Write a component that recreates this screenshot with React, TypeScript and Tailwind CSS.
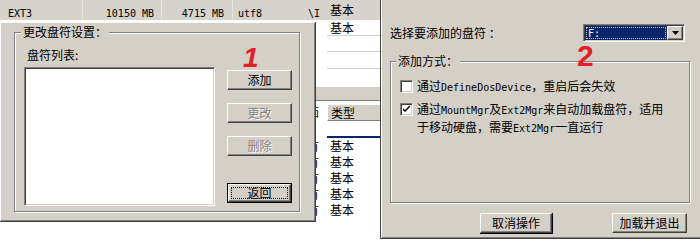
import type { ReactNode } from "react";

const raised =
  "border border-t-white border-l-white border-r-[#404040] border-b-[#404040] shadow-[inset_-1px_-1px_0_#808080] bg-[#d4d0c8]";
const sunken =
  "border border-t-[#808080] border-l-[#808080] border-r-white border-b-white shadow-[inset_1px_1px_0_#404040,inset_-1px_-1px_0_#d4d0c8]";
const etched = "border border-[#808080] shadow-[inset_1px_1px_0_#fff,1px_1px_0_#fff]";

function M({ children }: { children: ReactNode }) {
  return <span className="font-['DejaVu_Sans_Mono',monospace] text-[10px]">{children}</span>;
}

function Btn({
  children,
  className = "",
  disabled,
}: {
  children: ReactNode;
  className?: string;
  disabled?: boolean;
}) {
  return (
    <div
      className={`${raised} flex h-[20px] items-center justify-center text-[12px] leading-none ${
        disabled ? "text-[#808080] [text-shadow:1px_1px_0_#fff]" : "text-black"
      } ${className}`}
    >
      {children}
    </div>
  );
}

function Checkbox({ checked }: { checked?: boolean }) {
  return (
    <div className={`${sunken} flex h-[13px] w-[13px] shrink-0 items-center justify-center bg-white`}>
      {checked && (
        <svg width="7" height="7" viewBox="0 0 7 7">
          <path d="M0 2 L0 4 L2 6 L7 1 L7 -1 L2 4 Z" fill="#000" />
        </svg>
      )}
    </div>
  );
}

function ListRow({
  h,
  frag,
  text,
  cellClass = "",
}: {
  h: string;
  frag?: string;
  text?: string;
  cellClass?: string;
}) {
  return (
    <div className={`flex ${h}`}>
      <div className="w-[27px] overflow-hidden whitespace-nowrap pl-[7px] text-[12px] leading-[16px]">
        {frag}
      </div>
      <div className={`w-[53px] pl-[3px] text-[12px] leading-[16px] ${cellClass}`}>{text}</div>
    </div>
  );
}

export default function App() {
  return (
    <div className="relative h-[241px] w-[700px] overflow-hidden bg-white font-['Noto_Sans_CJK_SC',sans-serif] text-black">
      {/* window behind: file system list */}
      <div className="flex h-[20px] w-[380px] items-center bg-[#d6d3cd] whitespace-nowrap">
        <div className="h-full w-[83px] border-r border-r-[#e8e6e1] pl-[8px] leading-[20px]">
          <M>EXT3</M>
        </div>
        <div className="h-full w-[79px] border-r border-r-[#e8e6e1] pr-[7px] text-right leading-[20px]">
          <M>10150 MB</M>
        </div>
        <div className="h-full w-[71px] border-r border-r-[#e8e6e1] pr-[8px] text-right leading-[20px]">
          <M>4715 MB</M>
        </div>
        <div className="h-full w-[67px] pl-[5px] leading-[20px]">
          <M>utf8</M>
        </div>
        <div className="h-full w-[27px] overflow-hidden pl-[8px] leading-[20px]">
          <M>\I</M>
        </div>
        <div className="h-full w-[53px] pl-[3px] text-[12px] leading-[20px]">基本</div>
      </div>
      <div className="flex">
        <div className="w-[300px]" />
        <div className="flex w-[80px] flex-col">
          <ListRow h="h-[16px]" text="基本" frag="I" cellClass="border-b border-b-[#d0d0d0]" />
          <ListRow h="h-[16px]" cellClass="border-b border-b-[#d0d0d0]" />
          <ListRow h="h-[17px]" cellClass="border-b border-b-[#d0d0d0]" />
          <ListRow h="h-[18px]" />
          <div className="h-[14px] border-b border-b-[#808080] bg-[#d4d0c8]" />
          <div className="h-[3px]" />
          <ListRow
            h="h-[17px]"
            frag="茄"
            text="类型"
            cellClass="bg-[#d4d0c8] border-t border-t-white border-b border-b-[#808080] border-l border-l-white leading-[14px]"
          />
          <div className="h-[15px]" />
          <div className="flex h-[2px]">
            <div className="w-[27px]" />
            <div className="w-[53px] bg-[#0a246a]" />
          </div>
          {[0, 1, 2, 3, 4].map((i) => (
            <ListRow key={i} h="h-[16px]" text="基本" frag="有" />
          ))}
        </div>
      </div>

      {/* left dialog: 更改盘符设置 */}
      <div className="absolute left-0 top-[22px] z-10 h-[200px] w-[316px] border-r border-b border-r-[#404040] border-b-[#404040] bg-[#d4d0c8] pl-[14px] pt-[10px] shadow-[inset_1px_1px_0_#fff,inset_-1px_-1px_0_#808080]">
        <div className={`relative h-[180px] w-[286px] ${etched}`}>
          <span className="absolute -top-[8px] left-[6px] bg-[#d4d0c8] px-[2px] text-[12px] leading-[14px]">
            更改盘符设置：
          </span>
          <div className="flex pl-[9px] pt-[15px]">
            <div className="flex flex-col">
              <span className="pl-[3px] text-[12px] leading-[14px]">盘符列表:</span>
              <div className={`mt-[5px] h-[139px] w-[191px] bg-white ${sunken}`} />
            </div>
            <div className="ml-[12px] flex flex-col pt-[22px]">
              <Btn className="w-[65px]">添加</Btn>
              <Btn className="mt-[13px] w-[65px]" disabled>
                更改
              </Btn>
              <Btn className="mt-[13px] w-[65px]" disabled>
                删除
              </Btn>
              <div className="mt-[27px] w-[65px] border border-black">
                <div className={`${raised} flex h-[18px] items-center justify-center p-[2px]`}>
                  <div className="flex h-full w-full items-center justify-center border border-dotted border-black text-[12px] leading-none">
                    返回
                  </div>
                </div>
              </div>
            </div>
          </div>
        </div>
      </div>

      {/* right dialog: 选择要添加的盘符 */}
      <div className="absolute left-[380px] top-0 z-10 h-[239px] w-[320px] border-l border-b border-l-[#404040] border-b-[#404040] bg-[#d4d0c8] pl-[9px] pt-[24px] shadow-[inset_1px_0_0_#fff,inset_0_-1px_0_#808080]">
        <div className="flex h-[18px] items-center">
          <span className="w-[193px] text-[12px] leading-none">选择要添加的盘符 ：</span>
          <div className={`flex h-[18px] w-[102px] items-stretch bg-white p-[1px] ${sunken}`}>
            <div className="flex flex-1 items-center bg-[#0a246a] p-[1px]">
              <div className="flex h-full w-full items-center border border-dotted border-[#c8c8c8] pl-[1px] text-white">
                <M>F:</M>
              </div>
            </div>
            <div className={`${raised} flex w-[16px] items-center justify-center`}>
              <svg width="7" height="4" viewBox="0 0 7 4">
                <path d="M0 0 H7 L3.5 4 Z" fill="#000" />
              </svg>
            </div>
          </div>
        </div>

        <div className={`relative mt-[19px] h-[142px] w-[300px] ${etched}`}>
          <span className="absolute -top-[8px] left-[5px] bg-[#d4d0c8] px-[2px] text-[12px] leading-[14px]">
            添加方式：
          </span>
          <div className="flex flex-col pl-[9px] pt-[18px] text-[12px]">
            <div className="flex h-[13px] items-center gap-[4px]">
              <Checkbox />
              <span className="leading-none">
                通过<M>DefineDosDevice</M>，重启后会失效
              </span>
            </div>
            <div className="mt-[8px] flex items-start gap-[4px]">
              <div className="mt-[2px]">
                <Checkbox checked />
              </div>
              <div className="leading-[16px]">
                <div>
                  通过<M>MountMgr</M>及<M>Ext2Mgr</M>来自动加载盘符，适用
                </div>
                <div>
                  于移动硬盘，需要<M>Ext2Mgr</M>一直运行
                </div>
              </div>
            </div>
          </div>
        </div>

        <div className="mt-[10px] flex">
          <div className="ml-[90px] border-r border-b border-r-black border-b-black">
            <Btn className="w-[72px]">取消操作</Btn>
          </div>
          <Btn className="ml-[59px] w-[75px]">加载并退出</Btn>
        </div>
      </div>

      {/* red annotations */}
      <span className="absolute left-[243px] top-[44px] z-20 font-['Liberation_Sans',sans-serif] text-[28px] font-bold italic leading-none text-[#e3202a]">
        1
      </span>
      <span className="absolute left-[577px] top-[41px] z-20 font-['Liberation_Sans',sans-serif] text-[30px] font-semibold leading-none text-[#e3202a]">
        2
      </span>
    </div>
  );
}
